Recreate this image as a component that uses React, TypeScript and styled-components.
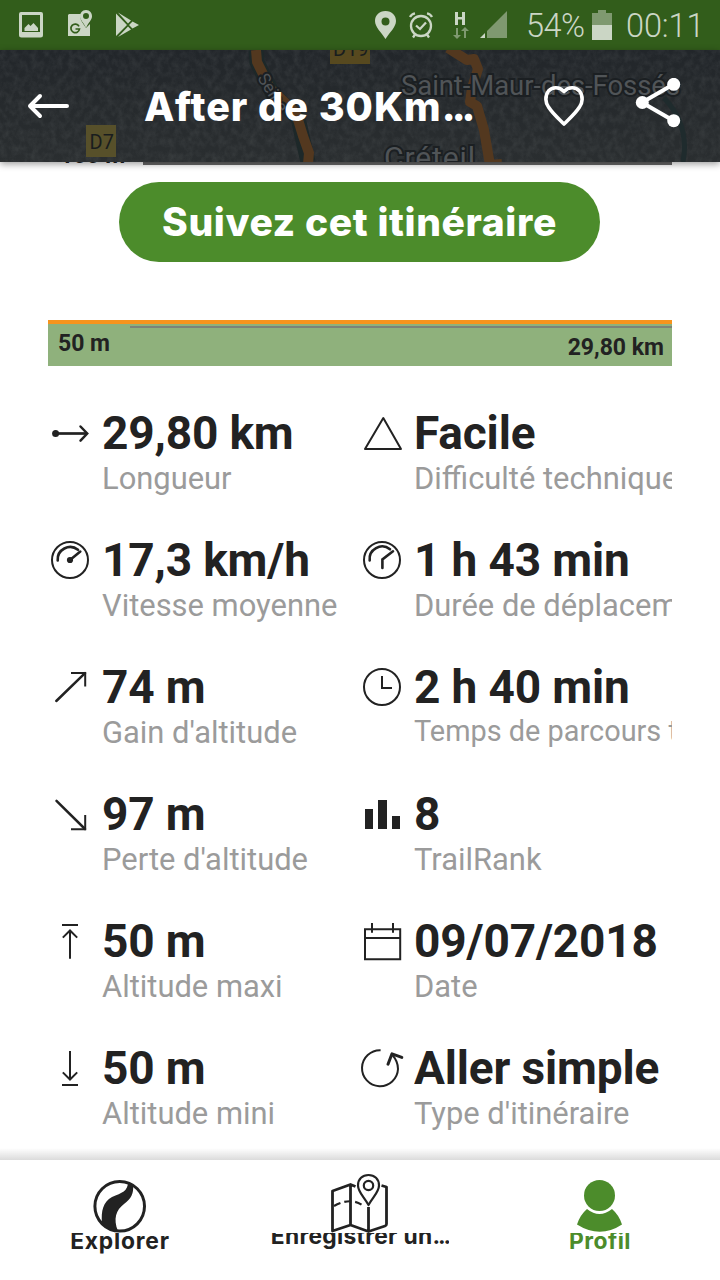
import React from "react";
import styled, { createGlobalStyle } from "styled-components";

const GlobalStyle = createGlobalStyle`
  * { box-sizing: border-box; }
  body { margin: 0; background: #fff; }
`;

const green = "#4c8c2b";
const ink = "#222222";

const Screen = styled.div`
  width: 720px;
  height: 1280px;
  display: flex;
  flex-direction: column;
  overflow: hidden;
  background: #fff;
  color: ${ink};
  font-family: Roboto, "Liberation Sans", sans-serif;
`;

const StatusBar = styled.div`
  flex: none;
  height: 50px;
  padding: 0 17px 0 18px;
  display: flex;
  align-items: center;
  justify-content: space-between;
  background: #325d1b;
  color: #cbd6c5;
`;

const StatusGroup = styled.div`
  display: flex;
  align-items: center;
`;

const StatusText = styled.span<{ $width: number; $left: number; $spacing?: number }>`
  width: ${(p) => p.$width}px;
  margin-left: ${(p) => p.$left}px;
  font-size: 32.5px;
  line-height: 50px;
  padding-top: 2px;
  letter-spacing: ${(p) => p.$spacing ?? 0}px;
  font-weight: 350;
  white-space: nowrap;
`;

const Header = styled.header`
  flex: none;
  position: relative;
  z-index: 2;
  height: 112px;
  display: flex;
  align-items: center;
  padding: 0 38px 0 26px;
  background: #25292b;
  color: #fff;
  box-shadow: 0 2px 7px rgba(0, 0, 0, 0.4);
`;

const MapLayer = styled.svg`
  position: absolute;
  inset: 0;
`;

const HeaderIcon = styled.svg<{ $left?: number }>`
  position: relative;
  flex: none;
  margin-left: ${(p) => p.$left ?? 0}px;
`;

const Title = styled.h1`
  position: relative;
  margin: 0 0 0 74px;
  width: 340px;
  font-family: Inter, "Open Sans", sans-serif;
  font-weight: 800;
  font-size: 39.5px;
  line-height: 48px;
  padding-top: 2px;
  letter-spacing: 1px;
  white-space: nowrap;
`;

const Dots = styled.i<{ $spacing: number }>`
  font-style: normal;
  letter-spacing: ${(p) => p.$spacing}px;
`;

const Content = styled.main`
  flex: 1;
  min-height: 0;
  overflow: hidden;
  padding: 0 48px;
  display: flex;
  flex-direction: column;
`;

const ScaleRow = styled.div`
  flex: none;
  height: 20px;
  display: flex;
  align-items: flex-start;
`;

const ScaleLabel = styled.span`
  width: 95px;
  padding-left: 12px;
  margin-top: -18px;
  font-weight: 700;
  font-size: 23px;
  line-height: 24px;
`;

const ScaleLine = styled.div`
  flex: 1;
  height: 3px;
  background: #686868;
`;

const FollowButton = styled.button`
  flex: none;
  align-self: center;
  width: 481px;
  height: 80px;
  margin-right: 1px;
  padding: 0;
  border: 0;
  border-radius: 40px;
  background: ${green};
  color: #fff;
  font-family: Inter, "Open Sans", sans-serif;
  font-weight: 800;
  font-size: 39px;
  line-height: 80px;
  letter-spacing: 0.6px;
  white-space: nowrap;
`;

const Profile = styled.section`
  flex: none;
  height: 46px;
  margin-top: 58px;
  border-top: 4px solid #f7941d;
  background: #8fb17c;
  padding: 2px 0 0;
  font-weight: 700;
  font-size: 23px;
  line-height: 27px;
`;

const ProfileLine = styled.div`
  height: 2px;
  margin-left: 82px;
  background: #7d8379;
`;

const ProfileLabels = styled.div`
  display: flex;
  justify-content: space-between;
  padding: 2px 8px 0 10px;

  span:last-child {
    padding-top: 4px;
  }
`;

const StatGrid = styled.div`
  flex: none;
  margin-top: 40px;
  display: grid;
  grid-template-columns: 312px 312px;
  grid-auto-rows: 127px;
`;

const Stat = styled.div`
  display: grid;
  grid-template-columns: 54px 258px;
  overflow: hidden;
`;

const StatIcon = styled.svg`
  width: 44px;
  height: 44px;
  margin-top: 6px;
  fill: none;
  stroke: ${ink};
  stroke-width: 2;
`;

const StatText = styled.div`
  overflow: hidden;
  white-space: nowrap;
`;

const StatValue = styled.div`
  font-weight: 700;
  font-size: 46px;
  line-height: 54px;
  letter-spacing: -0.15px;
`;

const StatLabel = styled.div<{ $size?: number }>`
  font-size: ${(p) => p.$size ?? 30.9}px;
  line-height: ${(p) => (p.$size ? 35 : 37)}px;
  color: #9b9b9b;
`;

const NavBar = styled.nav`
  flex: none;
  position: relative;
  z-index: 2;
  height: 120px;
  display: grid;
  grid-template-columns: repeat(3, 240px);
  background: #fff;

  &::before {
    content: "";
    position: absolute;
    left: 0;
    right: 0;
    top: -12px;
    height: 12px;
    background: linear-gradient(rgba(0, 0, 0, 0), rgba(0, 0, 0, 0.14));
  }
`;

const NavItem = styled.div<{ $active?: boolean }>`
  display: flex;
  flex-direction: column;
  align-items: center;
  padding-top: 13px;
  color: ${(p) => (p.$active ? green : ink)};
`;

const NavIcon = styled.svg`
  flex: none;
  width: 64px;
  height: 60px;
`;

const NavLabel = styled.div<{ $shift: number; $spacing: number }>`
  height: 26px;
  overflow: hidden;
  font-family: Inter, "Open Sans", sans-serif;
  font-weight: 750;
  font-size: 22.8px;
  letter-spacing: ${(p) => p.$spacing}px;
  white-space: nowrap;

  span {
    display: block;
    line-height: 26px;
    margin-top: ${(p) => p.$shift}px;
  }
`;

const icons: Record<string, React.ReactNode> = {
  length: (
    <>
      <circle cx="7.6" cy="21.5" r="3.5" fill={ink} stroke="none" />
      <path d="M7 21.5H39" strokeWidth="2.7" />
      <path d="M32.5 14.5L39.2 21.5L32.5 28.6" strokeWidth="2.5" strokeLinecap="round" />
    </>
  ),
  triangle: <path d="M23.3 6L41 37H5Z" strokeLinejoin="round" />,
  speed: (
    <>
      <circle cx="22" cy="21" r="18" />
      <path d="M9.7 21.5A12.5 12.5 0 0 1 30 10.8" strokeWidth="2.6" strokeLinecap="round" />
      <path d="M22 21L32.3 12.6" strokeWidth="2.6" strokeLinecap="round" />
      <circle cx="22" cy="21" r="3.1" fill={ink} stroke="none" />
    </>
  ),
  moving: (
    <>
      <circle cx="22" cy="21" r="18" />
      <path d="M9.7 21.5A12.5 12.5 0 0 1 30 10.3" strokeWidth="2.6" strokeLinecap="round" />
      <path d="M22.4 29V20.5L33 12.3" strokeWidth="2.6" strokeLinecap="round" />
    </>
  ),
  gain: (
    <>
      <path d="M8.3 35L37 7.2" strokeWidth="2.5" strokeLinecap="round" />
      <path d="M23 7H37.2V20.5" />
    </>
  ),
  clock: (
    <>
      <circle cx="22" cy="21" r="18" />
      <path d="M22 10V22H32" />
    </>
  ),
  loss: (
    <>
      <path d="M8.5 7.8L37 36" strokeWidth="2.5" strokeLinecap="round" />
      <path d="M23 36.2H37.2V22" />
    </>
  ),
  rank: <path d="M5 16h8v20H5zM18 7h9v29h-9zM32 23h8v13h-8z" fill={ink} stroke="none" />,
  max: <path d="M14 5H30M22 38.8V11M14.8 17.6L22 10.5L29.2 17.6" />,
  date: <path d="M5 9.2H40.2V39.2H5ZM5 18H40.2M12 3V12.7M33 3V12.7" />,
  min: <path d="M14 38H30M22 4V32.5M14.8 25.4L22 32.5L29.2 25.4" />,
  loop: (
    <>
      <path d="M20.6 3.2A18 18 0 1 0 38 22C38 16 36 12 32 7.500" />
      <path d="M28 17.2L32 6.8L41.8 10.4" strokeWidth="3" strokeLinecap="round" strokeLinejoin="round" />
    </>
  ),
};

const stats = [
  { icon: "length", value: "29,80 km", label: "Longueur" },
  { icon: "triangle", value: "Facile", label: "Difficulté technique" },
  { icon: "speed", value: "17,3 km/h", label: "Vitesse moyenne" },
  { icon: "moving", value: "1 h 43 min", label: "Durée de déplacement" },
  { icon: "gain", value: "74 m", label: "Gain d'altitude" },
  { icon: "clock", value: "2 h 40 min", label: "Temps de parcours total", size: 28.9 },
  { icon: "loss", value: "97 m", label: "Perte d'altitude" },
  { icon: "rank", value: "8", label: "TrailRank" },
  { icon: "max", value: "50 m", label: "Altitude maxi" },
  { icon: "date", value: "09/07/2018", label: "Date" },
  { icon: "min", value: "50 m", label: "Altitude mini" },
  { icon: "loop", value: "Aller simple", label: "Type d'itinéraire" },
];

const NotificationIcons = () => (
  <svg width="124" height="30" viewBox="18 10 124 30" fill="#cbd6c5">
    <path fillRule="evenodd" d="M21 12H41Q43 12 43 14V35Q43 37.500 40.500 37.500H21.500Q19 37.500 19 35V14Q19 12 21 12ZM22 15V32H40V15Z" />
    <path d="M24.500 31V28L28.500 24L30.500 26L33.500 23L38 28V31Z" />
    <path d="M69 14H81Q79.500 18 82 22L86 28L90 24V36H68V15Z" />
    <path fillRule="evenodd" d="M86 10C90 10 92 13 92 16.500C92 20 88 23 86 28C84 23 80 20 80 16.500C80 13 82 10 86 10ZM86 13A3 3 0 1 0 86 19A3 3 0 1 0 86 13Z" />
    <path d="M79 26.300A4.300 4.300 0 1 0 79.500 29H75.500" fill="none" stroke="#325d1b" strokeWidth="1.700" />
    <path d="M116 13.500V36L127 25ZM118 12.500L128 23.500L131 20.500ZM118 37L128 26.500L131 29.500ZM129 25L132.500 21.500L139 25L132.500 28.500Z" />
  </svg>
);

const SystemIcons = () => (
  <svg width="136" height="34" viewBox="374 8 136 34" fill="#cbd6c5">
    <path fillRule="evenodd" d="M385.500 11C392 11 396 15.500 396 21C396 27 390 32 385.500 39C381 32 375 27 375 21C375 15.500 379 11 385.500 11ZM385.500 17.500A4 4 0 1 0 385.500 25.500A4 4 0 1 0 385.500 17.500Z" />
    <g fill="none" stroke="#cbd6c5" strokeWidth="2.300">
      <circle cx="421" cy="26" r="10" />
      <path d="M416 25.500L420 29L426 22.500M410 17Q411.500 14 415 13.300M432 17Q430.500 14 427 13.300M415 34.500L413 37.500M427 34.500L429 37.500" />
    </g>
    <path d="M455 12h3v5h4v-5h3v13h-3v-5.500h-4V25h-3z" />
    <path d="M456 28h2v7h3l-4 4l-4 -4h3zM464 38h2v-7h3l-4 -4l-4 4h3z" opacity=".5" />
    <path d="M507 11V38H487V31Z" opacity=".5" />
    <path d="M485 33V38H480Z" />
  </svg>
);

const HeaderMap = () => (
  <MapLayer width="720" height="112" viewBox="0 50 720 112">
    <defs>
      <filter id="terrain" x="0" y="0" width="100%" height="100%">
        <feTurbulence type="fractalNoise" baseFrequency="0.16 0.13" numOctaves="5" seed="7" />
        <feColorMatrix values="0 0 0 0 .34  0 0 0 0 .36  0 0 0 0 .36  1 0 0 0 -.34" />
      </filter>
      <linearGradient id="shade" x1="0" x2="0" y1="0" y2="1">
        <stop offset="0" stopColor="#22262a" />
        <stop offset="1" stopColor="#2a2e30" />
      </linearGradient>
    </defs>
    <rect y="50" width="720" height="112" fill="url(#shade)" />
    <rect y="50" width="720" height="112" filter="url(#terrain)" opacity=".22" />
    <path d="M664 98Q690 125 683 162" stroke="#1f2b2d" strokeWidth="5" fill="none" />
    <path d="M256 50L257 62L273 94L298 118L303 140L308 162" stroke="#1d2829" strokeWidth="15" fill="none" />
    <path d="M256 50L257 62L270 88L296 113L303 136L309 153L308 164" stroke="#53381f" strokeWidth="10" fill="none" />
    <path d="M448 48L467 60L474 59L478 69L472 88L470 102L477 106L484 130L490 165L502 164" stroke="#53381f" strokeWidth="10" strokeLinejoin="round" fill="none" />
    <rect x="330" y="46" width="40" height="18" fill="#57491f" />
    <rect x="86" y="125" width="30" height="32" fill="#57502a" />
    <g fontFamily="Roboto, sans-serif" fill="#191d1e">
      <text x="333" y="56" fontSize="20">D19</text>
      <text x="89.500" y="149" fontSize="20">D7</text>
    </g>
    <g fontFamily="Roboto, sans-serif" fill="#505457" stroke="#1b1f22" strokeWidth="4" paintOrder="stroke">
      <text x="401" y="95" fontSize="27.500" textLength="279">Saint-Maur-des-Fossés</text>
      <text x="384" y="168" fontSize="30" textLength="91">Créteil</text>
      <text transform="translate(257 78) rotate(58)" fontSize="17">Seine</text>
    </g>
  </MapLayer>
);

export default function App() {
  return (
    <Screen>
      <GlobalStyle />
      <StatusBar>
        <NotificationIcons />
        <StatusGroup>
          <SystemIcons />
          <StatusText $left={16} $width={66} $spacing={-0.5}>54%</StatusText>
          <svg width="20" height="31" viewBox="0 0 20 31" fill="#cbd6c5">
            <path d="M6 0h8v3h6v12H0V3h6z" opacity=".5" />
            <path d="M0 15h20v15H0z" />
          </svg>
          <StatusText $left={14} $width={77} $spacing={-0.1}>00:11</StatusText>
        </StatusGroup>
      </StatusBar>

      <Header>
        <HeaderMap />
        <HeaderIcon width="44" height="28" viewBox="0 0 44 28" fill="none" stroke="#fff" strokeWidth="4" strokeLinecap="round" strokeLinejoin="round">
          <path d="M14 4L4 14L14 24M4 14H41" />
        </HeaderIcon>
        <Title>
          After de 30Km<Dots $spacing={-4}>...</Dots>
        </Title>
        <HeaderIcon $left={58} width="44" height="44" viewBox="542 84 44 44" fill="none" stroke="#fff" strokeWidth="3.600" strokeLinejoin="round">
          <path d="M564 91.500C559 86 552 87 548.500 91C544.500 96 545.500 103 548.500 107C553 114 559 119 564 124C569 119 575 114 579.500 107C582.500 103 583.500 96 579.500 91C576 87 569 86 564 91.500Z" />
        </HeaderIcon>
        <HeaderIcon $left={48} width="48" height="56" viewBox="634 78 48 56">
          <path d="M674 84L642 102.500L674 121" fill="none" stroke="#fff" strokeWidth="4" />
          <g fill="#fff">
            <circle cx="673.700" cy="84.300" r="6.500" />
            <circle cx="642.300" cy="102.500" r="6.500" />
            <circle cx="673.700" cy="120.700" r="6.500" />
          </g>
        </HeaderIcon>
      </Header>

      <Content>
        <ScaleRow>
          <ScaleLabel>100 m</ScaleLabel>
          <ScaleLine />
        </ScaleRow>
        <FollowButton>Suivez cet itinéraire</FollowButton>
        <Profile>
          <ProfileLine />
          <ProfileLabels>
            <span>50 m</span>
            <span>29,80 km</span>
          </ProfileLabels>
        </Profile>
        <StatGrid>
          {stats.map((s) => (
            <Stat key={s.label}>
              <StatIcon viewBox="0 0 44 44">{icons[s.icon]}</StatIcon>
              <StatText>
                <StatValue>{s.value}</StatValue>
                <StatLabel $size={s.size}>{s.label}</StatLabel>
              </StatText>
            </Stat>
          ))}
        </StatGrid>
      </Content>

      <NavBar>
        <NavItem>
          <NavIcon viewBox="88 1173 64 60">
            <circle cx="119.700" cy="1206.300" r="24.800" fill="none" stroke={ink} strokeWidth="3" />
            <path d="M128 1182L133 1185C134 1193 131 1199 124 1204C116 1210 113 1219 118 1231C112 1231 106 1228 102 1223C101 1211 103 1202 112 1197C122 1193 128 1191 128 1182Z" fill={ink} />
          </NavIcon>
          <NavLabel $shift={-5} $spacing={0.8}>
            <span>Explorer</span>
          </NavLabel>
        </NavItem>
        <NavItem>
          <NavIcon viewBox="328 1173 64 60" fill="none" stroke={ink} strokeWidth="2.800" strokeLinejoin="round">
            <path d="M355.500 1186.500L350.500 1184.500L332.500 1191V1231L350.500 1225L368.500 1231.500L385 1226Q386.500 1225.500 386.500 1224V1187L381.500 1185.500M350.500 1185V1225M368.500 1207V1231" />
            <path d="M334 1206Q350 1197 362 1205" strokeDasharray="7 4" strokeWidth="2.200" />
            <path d="M368.500 1205C364 1197 358 1192 358 1185.500C358 1179 362.500 1175 368.500 1175C374.500 1175 379 1179 379 1185.500C379 1192 373 1197 368.500 1205Z" strokeWidth="2.200" />
            <circle cx="368.500" cy="1185.500" r="4.700" strokeWidth="2.200" />
          </NavIcon>
          <NavLabel $shift={-10} $spacing={0.3}>
            <span>
              Enregistrer un<Dots $spacing={-2}>...</Dots>
            </span>
          </NavLabel>
        </NavItem>
        <NavItem $active>
          <NavIcon viewBox="568 1173 64 60" fill={green}>
            <circle cx="599.500" cy="1195.500" r="15.500" />
            <path d="M587 1209Q599.500 1219 612 1209Q619 1215 622 1224.500Q600 1239 577 1224.500Q580 1215 587 1209Z" />
          </NavIcon>
          <NavLabel $shift={-5} $spacing={0.5}>
            <span>Profil</span>
          </NavLabel>
        </NavItem>
      </NavBar>
    </Screen>
  );
}
